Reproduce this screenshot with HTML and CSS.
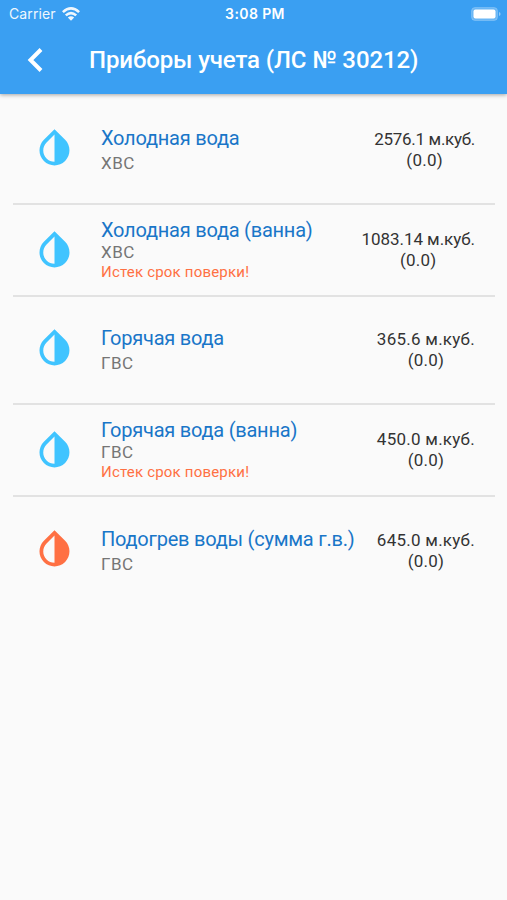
FILE: index.html
```html
<!DOCTYPE html>
<html lang="ru">
<head>
    <meta charset="UTF-8">
    <meta name="viewport" content="width=device-width, initial-scale=1.0">
    <title>Приборы учета</title>
    <link rel="stylesheet" href="styles.css">
</head>
<body>
    <svg class="sprite" aria-hidden="true">
        <symbol id="drop" viewBox="0 0 24 24">
            <path fill="currentColor" d="M17.66 7.93L12 2.27 6.34 7.93c-3.12 3.12-3.12 8.19 0 11.31C7.9 20.8 9.95 21.58 12 21.58c2.05 0 4.1-.78 5.66-2.34 3.12-3.12 3.12-8.19 0-11.31zM12 19.59c-1.6 0-3.11-.62-4.24-1.76C6.62 16.69 6 15.19 6 13.59s.62-3.11 1.76-4.24L12 5.1v14.49z"/>
        </symbol>
    </svg>

    <header class="header">
        <div class="status-bar">
            <div class="carrier">
                <span>Carrier</span>
                <svg class="wifi" viewBox="0 0 18 14">
                    <path fill="none" stroke="#fff" stroke-width="2.6" d="M0.9 5.1Q9-2.2 17.1 5.1M3.8 8.4Q9 3.8 14.2 8.4"/>
                    <path fill="#fff" d="M5.8 10.6Q9 8 12.2 10.6L9 13.8z"/>
                </svg>
            </div>
            <div class="time">3:08 PM</div>
            <svg class="battery" viewBox="0 0 30 14">
                <rect x="0.5" y="0.5" width="26" height="13" rx="3.5" fill="#fff" fill-opacity="0.25" stroke="#fff" stroke-opacity="0.2"/>
                <rect x="2.5" y="2.5" width="22" height="9" rx="2" fill="#fff"/>
                <path d="M28 5v4q1.6-.6 1.6-2T28 5z" fill="#fff" fill-opacity="0.45"/>
            </svg>
        </div>
        <div class="toolbar">
            <svg class="back" viewBox="0 0 16 26">
                <path fill="none" stroke="#fff" stroke-width="4" d="M14 2.5L3.5 13 14 23.5"/>
            </svg>
            <h1>Приборы учета (ЛС № 30212)</h1>
        </div>
    </header>

    <main class="meters">
        <div class="meter">
            <svg class="icon"><use href="#drop"/></svg>
            <div class="info">
                <div class="name">Холодная вода</div>
                <div class="type">ХВС</div>
            </div>
            <div class="value"><span class="tight">2576.1 м.куб.</span><br>(0.0)</div>
        </div>
        <div class="meter expired">
            <svg class="icon"><use href="#drop"/></svg>
            <div class="info">
                <div class="name">Холодная вода (ванна)</div>
                <div class="type">ХВС</div>
                <div class="warning">Истек срок поверки!</div>
            </div>
            <div class="value"><span class="long">1083.14 м.куб.</span><br>(0.0)</div>
        </div>
        <div class="meter">
            <svg class="icon"><use href="#drop"/></svg>
            <div class="info">
                <div class="name">Горячая вода</div>
                <div class="type">ГВС</div>
            </div>
            <div class="value">365.6 м.куб.<br>(0.0)</div>
        </div>
        <div class="meter expired">
            <svg class="icon"><use href="#drop"/></svg>
            <div class="info">
                <div class="name">Горячая вода (ванна)</div>
                <div class="type">ГВС</div>
                <div class="warning">Истек срок поверки!</div>
            </div>
            <div class="value">450.0 м.куб.<br>(0.0)</div>
        </div>
        <div class="meter">
            <svg class="icon hot"><use href="#drop"/></svg>
            <div class="info">
                <div class="name">Подогрев воды (сумма г.в.)</div>
                <div class="type">ГВС</div>
            </div>
            <div class="value">645.0 м.куб.<br>(0.0)</div>
        </div>
    </main>
</body>
</html>
```
FILE: styles.css
```css
* {
    box-sizing: border-box;
}
body {
    margin: 0;
    min-height: 900px;
    background: #fafafa;
    font-family: Roboto, sans-serif;
}
.sprite {
    display: none;
}
.header {
    height: 94px;
    background: #3a9ff2;
    color: white;
    box-shadow: 0 1px 4px rgba(0, 0, 0, 0.35);
}
.status-bar {
    display: grid;
    grid-template-columns: 1fr auto 1fr;
    align-items: center;
    height: 27px;
    padding: 0 6px 0 9px;
}
.carrier {
    display: flex;
    align-items: center;
    gap: 6px;
    font-family: Inter, sans-serif;
    font-size: 14px;
    letter-spacing: 0.1px;
    opacity: 0.92;
}
.wifi {
    width: 18px;
    height: 14px;
}
.time {
    font-family: Inter, sans-serif;
    font-size: 14px;
    font-weight: 600;
    letter-spacing: 0.4px;
}
.battery {
    width: 30px;
    height: 14px;
    justify-self: end;
}
.toolbar {
    display: flex;
    align-items: center;
    height: 66px;
    padding-left: 27px;
}
.back {
    width: 16px;
    height: 26px;
    margin-right: 46px;
}
h1 {
    margin: 0;
    font-size: 24px;
    font-weight: 500;
    letter-spacing: -0.12px;
    white-space: nowrap;
}
.meters {
    padding: 3px 12px 0 13px;
}
.meter {
    display: flex;
    align-items: center;
    height: 107.5px;
    padding: 0 20px 0 19px;
    border-bottom: 2px solid #e2e2e2;
}
.meter.expired {
    height: 92.5px;
}
.meter:last-child {
    border-bottom: none;
}
.icon {
    flex: none;
    width: 45px;
    height: 45px;
    margin: 0 24px 4px 0;
    color: #40c4ff;
}
.icon.hot {
    color: #ff7043;
}
.expired .icon {
    margin-bottom: 0;
}
.info {
    flex: 1;
    white-space: nowrap;
}
.name {
    color: #1976c8;
    font-size: 20px;
    line-height: 24px;
    letter-spacing: -0.23px;
}
.type {
    margin-top: 2px;
    color: #757575;
    font-size: 17px;
    line-height: 22px;
    letter-spacing: 0.5px;
}
.expired .type {
    margin-top: 0;
    line-height: 20px;
}
.warning {
    color: #ff7043;
    font-size: 15px;
    line-height: 20px;
    letter-spacing: 0.2px;
}
.value {
    color: #333;
    font-size: 17px;
    line-height: 21px;
    letter-spacing: 0.25px;
    text-align: center;
    white-space: nowrap;
}
.tight {
    letter-spacing: -0.3px;
}
.long {
    letter-spacing: -0.05px;
}
```
